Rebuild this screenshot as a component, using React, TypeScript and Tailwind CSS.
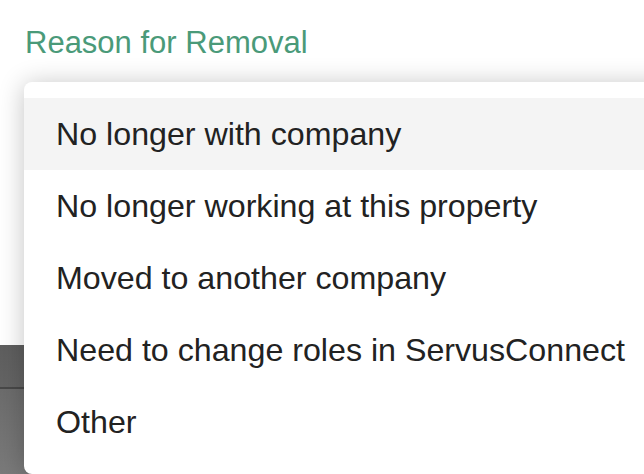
const reasons = [
  "No longer with company",
  "No longer working at this property",
  "Moved to another company",
  "Need to change roles in ServusConnect",
  "Other",
];

export default function App() {
  return (
    <div className="relative h-[474px] w-[644px] overflow-hidden bg-white font-['Liberation_Sans',Arial,sans-serif]">
      <div className="flex h-full flex-col">
        <div className="h-[345px] bg-white pl-[25px] pt-[25px]">
          <h2 className="text-[31px] leading-[36px] text-[#4a9a79]">Reason for Removal</h2>
        </div>
        <div className="h-[42px] bg-gradient-to-b from-[#5e5e5e] to-[#646464]" />
        <div className="h-[2px] bg-[#484848]" />
        <div className="flex-1 bg-gradient-to-b from-[#6c6c6c] to-[#7a7a7a]" />
      </div>

      {/* dropdown menu */}
      <ul className="absolute left-[24px] top-[82px] w-[700px] rounded-[8px] bg-white py-[16px] shadow-[0_2px_26px_rgba(0,0,0,0.24)]">
        {reasons.map((reason, i) => (
          <li
            key={reason}
            className={`h-[72px] pl-[32px] text-[32.2px] leading-[72px] text-[#222222] ${i === 0 ? "bg-[#f4f4f4]" : ""}`}
          >
            {reason}
          </li>
        ))}
      </ul>
    </div>
  );
}
